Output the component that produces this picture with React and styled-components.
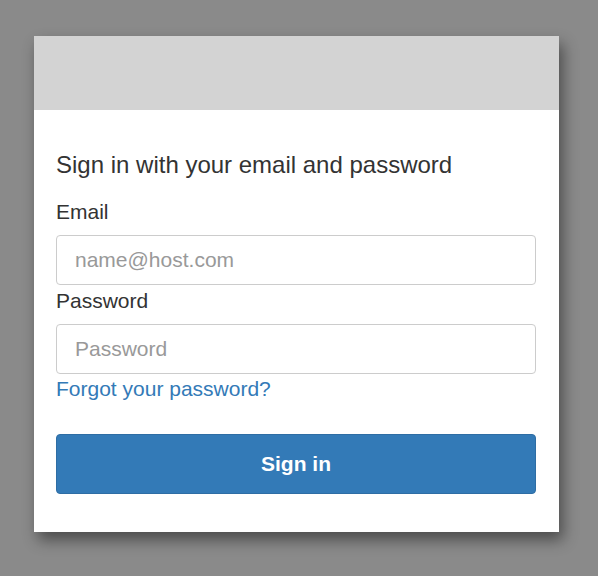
import React from 'react';
import styled, { createGlobalStyle } from 'styled-components';

const GlobalStyle = createGlobalStyle`
  html, body {
    margin: 0;
    padding: 0;
    background: #8a8a8a;
    font-family: "Liberation Sans", Arial, Helvetica, sans-serif;
  }
`;

const Page = styled.div`
  width: 598px;
  height: 576px;
  padding: 36px 0 0 34px;
  box-sizing: border-box;
`;

const Card = styled.div`
  width: 525px;
  height: 496px;
  background: #fff;
  box-shadow: 4px 8px 14px rgba(0, 0, 0, 0.45);
  display: flex;
  flex-direction: column;
`;

const Banner = styled.div`
  height: 74px;
  background: #d3d3d3;
`;

const Body = styled.form`
  width: 480px;
  padding: 40px 0 0 22px;
  display: flex;
  flex-direction: column;
`;

const Title = styled.h2`
  margin: 0 0 19px;
  font-size: 24px;
  font-weight: 400;
  line-height: 30px;
  color: #333;
`;

const Label = styled.label`
  font-size: 21px;
  line-height: 26px;
  color: #333;
  margin-bottom: 10px;
`;

const Input = styled.input`
  height: 50px;
  box-sizing: border-box;
  border: 1px solid #ccc;
  border-radius: 4px;
  padding: 0 18px;
  font-size: 21px;
  font-family: inherit;
  color: #555;
  margin-bottom: ${p => p.$gap || 0}px;
  &::placeholder {
    color: #999;
  }
`;

const Link = styled.a`
  font-size: 21px;
  line-height: 30px;
  color: #337ab7;
  text-decoration: none;
  margin-bottom: 30px;
  align-self: flex-start;
`;

const Button = styled.button`
  height: 60px;
  background: #337ab7;
  border: 1px solid #2e6da4;
  border-radius: 4px;
  color: #fff;
  font-family: inherit;
  font-size: 21px;
  font-weight: 700;
`;

export default function App() {
  return (
    <>
      <GlobalStyle />
      <Page>
        <Card>
          <Banner />
          <Body onSubmit={e => e.preventDefault()}>
            <Title>Sign in with your email and password</Title>
            <Label htmlFor="email">Email</Label>
            <Input id="email" type="text" placeholder="name@host.com" $gap={3} />
            <Label htmlFor="password">Password</Label>
            <Input id="password" type="password" placeholder="Password" />
            <Link href="#">Forgot your password?</Link>
            <Button type="submit">Sign in</Button>
          </Body>
        </Card>
      </Page>
    </>
  );
}
